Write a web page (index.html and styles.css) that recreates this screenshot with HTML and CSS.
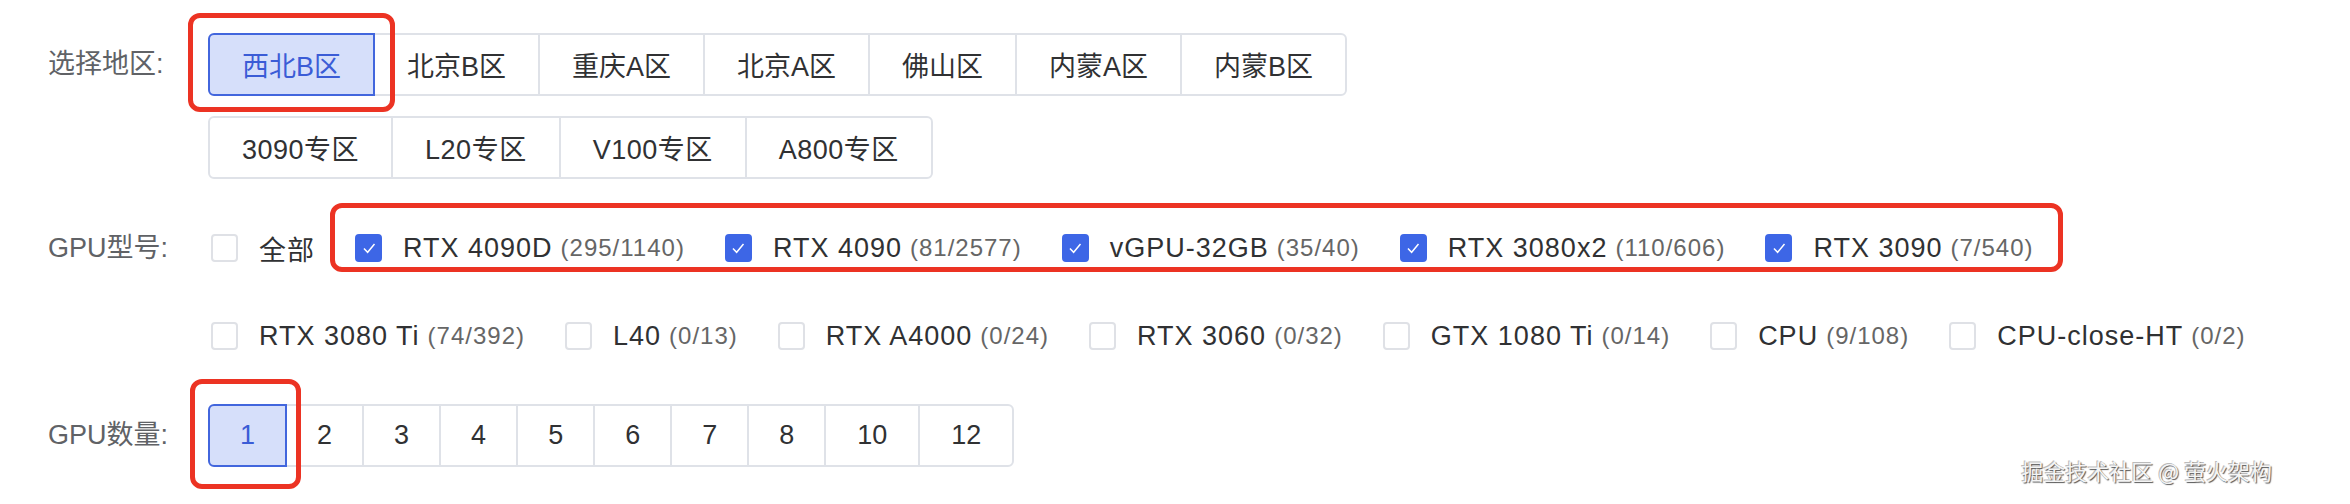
FILE: index.html
```html
<!DOCTYPE html>
<html lang="zh-CN">
<head>
  <meta charset="UTF-8" />
  <meta name="viewport" content="width=device-width, initial-scale=1" />
  <title>选择实例</title>
  <link rel="stylesheet" href="styles.css">
</head>
<body>
  <div class="filters">
    <div class="filter-row region">
      <div class="filter-label">选择地区:</div>
      <div class="btn-groups">
        <div class="btn-group">
          <button type="button" class="opt active mark mark-region">西北B区</button>
          <button type="button" class="opt">北京B区</button>
          <button type="button" class="opt">重庆A区</button>
          <button type="button" class="opt">北京A区</button>
          <button type="button" class="opt">佛山区</button>
          <button type="button" class="opt">内蒙A区</button>
          <button type="button" class="opt">内蒙B区</button>
        </div>
        <div class="btn-group zones">
          <button type="button" class="opt">3090专区</button>
          <button type="button" class="opt">L20专区</button>
          <button type="button" class="opt">V100专区</button>
          <button type="button" class="opt">A800专区</button>
        </div>
      </div>
    </div>

    <div class="filter-row model">
      <div class="filter-label">GPU型号:</div>
      <div class="checks">
        <label class="check"><span class="box"></span>全部</label>
        <div class="group mark mark-model">
          <label class="check on"><span class="box"><svg viewBox="0 0 24 24"><path d="M6.5 12.5l4 4.2 7.5-9"/></svg></span>RTX 4090D<span class="num">(295/1140)</span></label>
          <label class="check on"><span class="box"><svg viewBox="0 0 24 24"><path d="M6.5 12.5l4 4.2 7.5-9"/></svg></span>RTX 4090<span class="num">(81/2577)</span></label>
          <label class="check on"><span class="box"><svg viewBox="0 0 24 24"><path d="M6.5 12.5l4 4.2 7.5-9"/></svg></span>vGPU-32GB<span class="num">(35/40)</span></label>
          <label class="check on"><span class="box"><svg viewBox="0 0 24 24"><path d="M6.5 12.5l4 4.2 7.5-9"/></svg></span>RTX 3080x2<span class="num">(110/606)</span></label>
          <label class="check on"><span class="box"><svg viewBox="0 0 24 24"><path d="M6.5 12.5l4 4.2 7.5-9"/></svg></span>RTX 3090<span class="num">(7/540)</span></label>
        </div>
        <label class="check"><span class="box"></span>RTX 3080 Ti<span class="num">(74/392)</span></label>
        <label class="check"><span class="box"></span>L40<span class="num">(0/13)</span></label>
        <label class="check"><span class="box"></span>RTX A4000<span class="num">(0/24)</span></label>
        <label class="check"><span class="box"></span>RTX 3060<span class="num">(0/32)</span></label>
        <label class="check"><span class="box"></span>GTX 1080 Ti<span class="num">(0/14)</span></label>
        <label class="check"><span class="box"></span>CPU<span class="num">(9/108)</span></label>
        <label class="check"><span class="box"></span>CPU-close-HT<span class="num">(0/2)</span></label>
      </div>
    </div>

    <div class="filter-row count">
      <div class="filter-label">GPU数量:</div>
      <div class="btn-group nums">
        <button type="button" class="opt active mark mark-count">1</button>
        <button type="button" class="opt">2</button>
        <button type="button" class="opt">3</button>
        <button type="button" class="opt">4</button>
        <button type="button" class="opt">5</button>
        <button type="button" class="opt">6</button>
        <button type="button" class="opt">7</button>
        <button type="button" class="opt">8</button>
        <button type="button" class="opt">10</button>
        <button type="button" class="opt">12</button>
      </div>
    </div>
  </div>

  <div class="watermark">掘金技术社区 @ 萤火架构</div>
</body>
</html>
```

FILE: styles.css
```css
body {
  font-family: "Liberation Sans", "Noto Sans CJK SC", sans-serif;
  margin: 0;
  padding: 33px 0 0 48px;
  min-height: 504px;
  box-sizing: border-box;
  position: relative;
  overflow: hidden;
  background: #fff;
  color: #303133;
}
.filter-row {
  display: flex;
  align-items: flex-start;
}
.filter-row.model {
  margin-top: 51px;
}
.filter-row.count {
  margin-top: 50px;
}
.filter-label {
  flex: none;
  width: 160px;
  font-size: 27px;
  color: #606266;
  line-height: 63px;
}
.model .filter-label {
  line-height: 36px;
}
.btn-groups {
  display: flex;
  flex-direction: column;
  align-items: flex-start;
  gap: 20px;
}
.btn-group {
  display: flex;
}
.opt {
  height: 63px;
  padding: 0 32px;
  margin: 0 0 0 -2px;
  border: 2px solid #dfe2e8;
  background: #fff;
  font-family: inherit;
  font-size: 27px;
  color: #303133;
  cursor: pointer;
}
.zones .opt {
  letter-spacing: 0.5px;
}
.nums .opt {
  padding: 0 30px;
}
.nums .opt:nth-last-child(-n+2) {
  padding: 0 31px;
}
.opt:first-child {
  margin-left: 0;
  border-radius: 6px 0 0 6px;
}
.opt:last-child {
  border-radius: 0 6px 6px 0;
}
.opt.active {
  position: relative;
  z-index: 1;
  background: #d6dffa;
  border-color: #4266dd;
  color: #3b5cd6;
}
.checks {
  display: flex;
  flex-wrap: wrap;
  column-gap: 40px;
  row-gap: 52px;
  margin-left: 3px;
}
.group {
  display: flex;
  column-gap: 40px;
}
.check {
  display: inline-flex;
  align-items: center;
  height: 36px;
  font-size: 27px;
  letter-spacing: 1px;
  white-space: nowrap;
  color: #303133;
}
.box {
  width: 27px;
  height: 28px;
  box-sizing: border-box;
  border: 2px solid #dfe1e6;
  border-radius: 4px;
  margin-right: 21px;
  display: flex;
  align-items: center;
  justify-content: center;
}
.check.on .box {
  background: #3d66e6;
  border-color: #3d66e6;
}
.box svg {
  width: 22px;
  height: 22px;
  fill: none;
  stroke: #fff;
  stroke-width: 1.6;
}
.num {
  font-size: 24px;
  color: #666;
  margin-left: 8px;
}

/* red annotation frames */
.mark {
  position: relative;
}
.mark::after {
  content: "";
  position: absolute;
  border: 5px solid #ec3323;
  border-radius: 12px;
  pointer-events: none;
}
.mark-region::after {
  top: -22px;
  bottom: -18px;
  left: -22px;
  right: -22px;
}
.mark-model::after {
  top: -27px;
  bottom: -6px;
  left: -25px;
  right: -29px;
}
.mark-count::after {
  top: -27px;
  bottom: -24px;
  left: -20px;
  right: -16px;
}
.watermark {
  position: absolute;
  right: 78px;
  bottom: 18px;
  font-family: "Noto Sans CJK SC", sans-serif;
  font-size: 22px;
  color: #f4f4f4;
  text-shadow: 1px 1px 1px #555, -1px -1px 0 #bbb;
}
```
